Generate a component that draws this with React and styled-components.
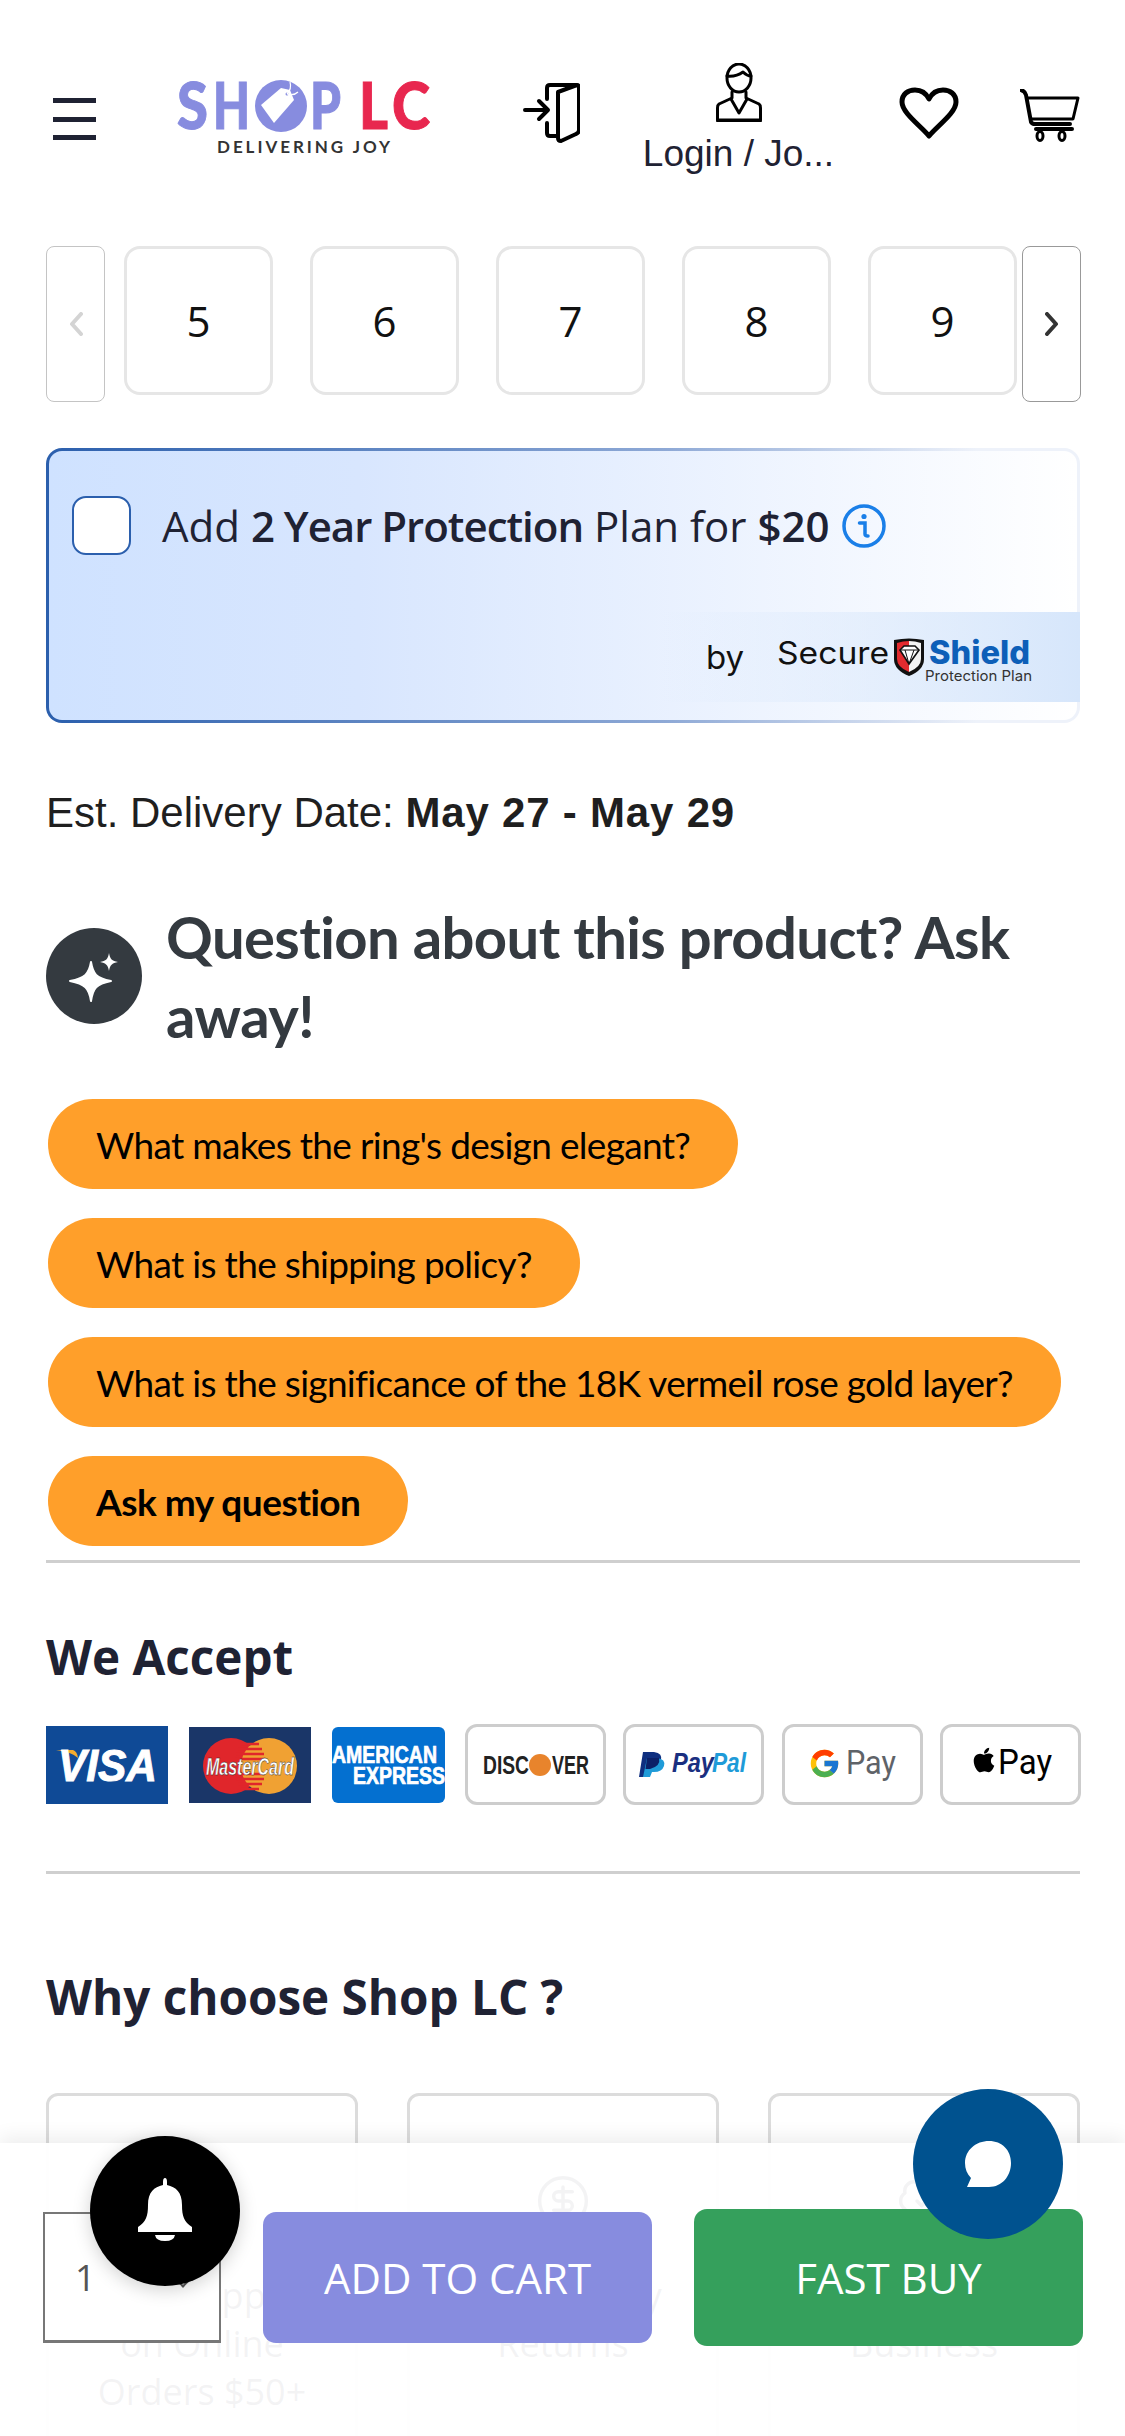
import React from 'react'
import styled, { createGlobalStyle } from 'styled-components'
import { FcGoogle } from 'react-icons/fc'
import { FaApple } from 'react-icons/fa'
import { Truck, CircleDollarSign, BadgeCheck } from 'lucide-react'

const GlobalStyle = createGlobalStyle`
  html, body {
    margin: 0;
    padding: 0;
    background: #fff;
    overflow: hidden;
  }
  * { box-sizing: border-box; }
`

const questions = [
  { text: "What makes the ring's design elegant?" },
  { text: 'What is the shipping policy?' },
  { text: 'What is the significance of the 18K vermeil rose gold layer?' },
  { text: 'Ask my question', strong: true },
]

const perks = [
  { icon: Truck, lines: ['Free Shipping', 'on Online', 'Orders $50+'] },
  { icon: CircleDollarSign, lines: ['Easy 30-day', 'Returns'] },
  { icon: BadgeCheck, lines: ['Family Owned', 'Business'] },
]

function Logo() {
  return (
    <BrandSvg viewBox="0 0 253 72" width="253" height="72">
      <g fontFamily="Lato, sans-serif" fontWeight="900" fontSize="65" strokeWidth="1">
        <text x="0" y="47" fill="#878cdf" stroke="#878cdf" textLength="31" lengthAdjust="spacingAndGlyphs">S</text>
        <text x="36" y="47" fill="#878cdf" stroke="#878cdf" textLength="37" lengthAdjust="spacingAndGlyphs">H</text>
        <text x="133" y="47" fill="#878cdf" stroke="#878cdf" textLength="31" lengthAdjust="spacingAndGlyphs">P</text>
        <text x="182" y="47" fill="#e8274f" stroke="#e8274f" textLength="29" lengthAdjust="spacingAndGlyphs">L</text>
        <text x="215" y="47" fill="#e8274f" stroke="#e8274f" textLength="38" lengthAdjust="spacingAndGlyphs">C</text>
      </g>
      <circle cx="104" cy="24" r="26" fill="#878cdf" />
      <path d="M84 23 L104 6 L113 8 L117 18 L97 41 Z" fill="#fff" />
      <circle cx="110" cy="12" r="1.5" fill="#878cdf" />
      <path d="M110 12 Q115 7 113 0 M110 12 Q117 14 121 10" stroke="#fff" strokeWidth="1.2" fill="none" />
      <text x="40" y="71" fontFamily="Lato, sans-serif" fontWeight="700" fontSize="17" fill="#333" textLength="173">DELIVERING JOY</text>
    </BrandSvg>
  )
}

function DoorIcon() {
  return (
    <svg viewBox="0 0 57 60" width="57" height="60" fill="none" stroke="#000" strokeWidth="4" strokeLinecap="round" strokeLinejoin="round">
      <path d="M2 27 H24 M16 18 L25 27 L16 36" />
      <path d="M24 16 V5 Q24 2 27 2 H53" />
      <path d="M24 40 V50 Q24 53 27 53 H34" />
      <path d="M35 9 L54 2 Q56 2 56 5 V47 Q56 50 53 51 L38 58 Q35 58 35 55 Z" />
    </svg>
  )
}

function PersonIcon() {
  return (
    <svg viewBox="0 0 46 59" width="46" height="59" fill="none" stroke="#000" strokeWidth="3" strokeLinejoin="round" strokeLinecap="round">
      <ellipse cx="23" cy="15" rx="12" ry="14" />
      <path d="M11 13 Q20 14 27 9 Q31 13 35 13" />
      <path d="M16 29 V35 L3 41 Q1.5 42 1.5 45 V57 H44.5 V45 Q44.5 42 43 41 L30 35 V29" />
      <path d="M15 36 L23 50 L31 36" />
      <path d="M1 58 H45" strokeWidth="2" />
    </svg>
  )
}

function HeartIcon() {
  return (
    <svg viewBox="0 0 60 52" width="60" height="52" fill="none" stroke="#000" strokeWidth="5" strokeLinejoin="round">
      <path d="M30 49 C22 39 3 26 3 15 C3 7 9 3 16 3 C22 3 27 6 30 12 C33 6 38 3 44 3 C51 3 57 7 57 15 C57 26 38 39 30 49 Z" />
    </svg>
  )
}

function CartIcon() {
  return (
    <svg viewBox="0 0 60 54" width="60" height="54" fill="none" stroke="#000" strokeWidth="4" strokeLinejoin="round" strokeLinecap="round">
      <path d="M1 1 Q5 2 6 6 L11 33 Q12 35 15 35 H50" />
      <path d="M7 9 H58 L53 30 H12" strokeWidth="3" />
      <path d="M16 40 H52" />
      <ellipse cx="20" cy="47" rx="3" ry="4.5" strokeWidth="3" />
      <ellipse cx="42" cy="47" rx="3" ry="4.5" strokeWidth="3" />
    </svg>
  )
}

function Chevron({ dir, color }) {
  return (
    <svg viewBox="0 0 14 24" width="14" height="24" fill="none" stroke={color} strokeWidth="4" strokeLinecap="round" strokeLinejoin="round">
      <path d={dir === 'left' ? 'M12 2 L3 12 L12 22' : 'M2 2 L11 12 L2 22'} />
    </svg>
  )
}

function InfoIcon() {
  return (
    <svg viewBox="0 0 44 44" width="44" height="44" fill="none">
      <circle cx="22" cy="22" r="20" stroke="#1a7fe8" strokeWidth="3.5" />
      <circle cx="22" cy="12.5" r="2.6" fill="#1a7fe8" />
      <path d="M17.5 19 H23 V30 Q23 32 26 32" stroke="#1a7fe8" strokeWidth="3.5" strokeLinecap="round" />
    </svg>
  )
}

function SecureShield() {
  return (
    <BrandSvg viewBox="0 0 265 48" width="265" height="48">
      <text x="0" y="31" fontFamily="Inter, sans-serif" fontSize="31" fill="#111" textLength="112" lengthAdjust="spacingAndGlyphs">Secure</text>
      <path d="M117 7 Q132 4 147 7 V26 Q147 37 132 43 Q117 37 117 26 Z" fill="#111" />
      <path d="M120 10 Q126 8 132 8 V39 Q120 34 120 26 Z" fill="#e32b2f" />
      <path d="M132 8 Q138 8 144 10 V26 Q144 34 132 39 Z" fill="#f3f3f3" />
      <path d="M123 17 L127 13 H138 L142 17 L132 31 Z" fill="#fff" stroke="#111" strokeWidth="1.6" />
      <path d="M123 17 H142 M128 17 L132 31 L137 17" stroke="#111" strokeWidth="1" fill="none" />
      <text x="152" y="31" fontFamily="Inter, sans-serif" fontWeight="800" fontSize="32" fill="#0d5fb8" textLength="101" lengthAdjust="spacingAndGlyphs">Shield</text>
      <text x="148" y="48" fontFamily="Inter, sans-serif" fontSize="14.5" fill="#333" textLength="107" lengthAdjust="spacingAndGlyphs">Protection Plan</text>
    </BrandSvg>
  )
}

function SparkleIcon() {
  return (
    <svg viewBox="0 0 96 96" width="96" height="96">
      <circle cx="48" cy="48" r="48" fill="#343a40" />
      <path d="M45 34 C47 46 50 50 65 53 C50 56 47 60 45 73 C43 60 39 56 24 53 C39 50 43 46 45 34 Z" fill="#fff" stroke="#fff" strokeWidth="2" strokeLinejoin="round" />
      <path d="M63 25 C64 31 66 33 72 34 C66 35 64 37 63 43 C62 37 60 35 54 34 C60 33 62 31 63 25 Z" fill="#fff" />
    </svg>
  )
}

function VisaLogo() {
  return (
    <BrandSvg viewBox="0 0 122 78" width="122" height="78">
      <path d="M10 24 H27 Q31 25 32 32 Q26 26 10 24 Z" fill="#f2ac2f" />
      <text x="12" y="55" fontFamily="'Liberation Sans', sans-serif" fontWeight="700" fontStyle="italic" fontSize="44" fill="#fff" stroke="#fff" strokeWidth="1" textLength="99" lengthAdjust="spacingAndGlyphs">VISA</text>
    </BrandSvg>
  )
}

function MasterCardLogo() {
  return (
    <BrandSvg viewBox="0 0 122 78" width="122" height="78">
      <circle cx="42" cy="39" r="28" fill="#e0262b" />
      <circle cx="80" cy="39" r="28" fill="#f0a133" />
      <path d="M52 17 H70 M49 22 H73 M47 27 H75 M46 32 H76 M46 47 H76 M47 52 H75 M49 57 H73 M52 62 H70" stroke="#e0262b" strokeWidth="2.4" />
      <text x="17" y="48" fontFamily="'Liberation Sans', sans-serif" fontWeight="700" fontStyle="italic" fontSize="23" fill="#fff" stroke="#222" strokeWidth="0.4" textLength="88" lengthAdjust="spacingAndGlyphs">MasterCard</text>
    </BrandSvg>
  )
}

function AmexLogo() {
  return (
    <BrandSvg viewBox="0 0 113 76" width="113" height="76">
      <g fontFamily="'Liberation Sans', sans-serif" fontWeight="700" fontSize="23" fill="#fff" stroke="#fff" strokeWidth="0.7">
        <text x="0" y="36" textLength="105" lengthAdjust="spacingAndGlyphs">AMERICAN</text>
        <text x="21" y="57" textLength="92" lengthAdjust="spacingAndGlyphs">EXPRESS</text>
      </g>
    </BrandSvg>
  )
}

function DiscoverLogo() {
  return (
    <BrandSvg viewBox="0 0 135 75" width="135" height="75">
      <g fontFamily="'Liberation Sans', sans-serif" fontWeight="700" fontSize="25" fill="#222">
        <text x="15" y="47" textLength="46" lengthAdjust="spacingAndGlyphs">DISC</text>
        <text x="84" y="47" textLength="37" lengthAdjust="spacingAndGlyphs">VER</text>
      </g>
      <circle cx="72" cy="38" r="11" fill="#e8842c" />
    </BrandSvg>
  )
}

function PayPalLogo() {
  return (
    <BrandSvg viewBox="0 0 135 75" width="135" height="75">
      <path d="M17 25 H28 Q37 26 35 34 Q33 42 23 42 H21 L19 50 H13 Z" fill="#0f2f80" />
      <path d="M21 31 H31 Q40 32 38 39 Q36 45 28 45 H26 L24 50 H17 Z" fill="#1f9bd8" />
      <path d="M21 31 H33 Q35 39 24 42 H19.5 Z" fill="#0c2068" />
      <text x="46" y="45" fontFamily="'Liberation Sans', sans-serif" fontWeight="700" fontStyle="italic" fontSize="27" fill="#1a2f80" textLength="42" lengthAdjust="spacingAndGlyphs">Pay</text>
      <text x="86" y="45" fontFamily="'Liberation Sans', sans-serif" fontWeight="700" fontStyle="italic" fontSize="27" fill="#1f9bd8" textLength="34" lengthAdjust="spacingAndGlyphs">Pal</text>
    </BrandSvg>
  )
}

function GooglePayLogo() {
  return (
    <BrandSvg viewBox="0 0 135 75" width="135" height="75">
      <FcGoogle x="23" y="20" size="33" />
      <text x="61" y="47" fontFamily="Roboto, sans-serif" fontSize="34" fill="#5f6368" textLength="50" lengthAdjust="spacingAndGlyphs">Pay</text>
    </BrandSvg>
  )
}

function ApplePayLogo() {
  return (
    <BrandSvg viewBox="0 0 135 75" width="135" height="75">
      <FaApple x="27" y="19" size="28" color="#000" />
      <text x="55" y="47" fontFamily="Roboto, sans-serif" fontSize="35" fill="#000" textLength="54" lengthAdjust="spacingAndGlyphs">Pay</text>
    </BrandSvg>
  )
}

function BellIcon() {
  return (
    <svg viewBox="0 0 54 63" width="54" height="63" fill="#fff">
      <path d="M27 0 Q29 0 29 4 V7 C38 9 44 14 44 27 C44 38 46 44 54 49 V54 H0 V49 C8 44 10 38 10 27 C10 14 16 9 25 7 V4 Q25 0 27 0 Z" />
      <path d="M17 57 H37 Q36 63 27 63 Q18 63 17 57 Z" />
    </svg>
  )
}

function ChatIcon() {
  return (
    <svg viewBox="0 0 46 47" width="46" height="47" fill="#fff">
      <path d="M24 0 C37 0 46 9 46 22 C46 35 37 46 24 46 H2 L6 37 C2 33 0 28 0 22 C0 9 11 0 24 0 Z" />
    </svg>
  )
}

function App() {
  return (
    <>
      <GlobalStyle />
      <Page>
        <Header>
          <Burger>
            <span />
            <span />
            <span />
          </Burger>
          <HeaderCell $top={82}><Logo /></HeaderCell>
          <HeaderCell $top={83}><DoorIcon /></HeaderCell>
          <LoginCell>
            <PersonIcon />
            <LoginText>Login / Jo...</LoginText>
          </LoginCell>
          <HeaderCell $top={87}><HeartIcon /></HeaderCell>
          <HeaderCell $top={89}><CartIcon /></HeaderCell>
        </Header>

        <Pager>
          <PagerArrow $muted><Chevron dir="left" color="#d4d4d4" /></PagerArrow>
          <PagerList>
            {[5, 6, 7, 8, 9].map((n) => (
              <PagerItem key={n}>{n}</PagerItem>
            ))}
          </PagerList>
          <PagerArrow><Chevron dir="right" color="#333" /></PagerArrow>
        </Pager>

        <Protection>
          <ProtectionRow>
            <Checkbox />
            <ProtectionText>
              Add <b>2 Year Protection</b> Plan for <Price>$20</Price>
            </ProtectionText>
            <InfoIcon />
          </ProtectionRow>
          <ProviderStrip>
            <By>by</By>
            <SecureShield />
          </ProviderStrip>
        </Protection>

        <Delivery>
          Est. Delivery Date: <b>May 27 - May 29</b>
        </Delivery>

        <QuestionHead>
          <SparkleIcon />
          <QuestionTitle>Question about this product? Ask away!</QuestionTitle>
        </QuestionHead>

        <Pills>
          {questions.map((q) => (
            <Pill key={q.text} $strong={q.strong}>{q.text}</Pill>
          ))}
        </Pills>

        <Divider $top={14} />

        <SectionTitle $top={64}>We Accept</SectionTitle>
        <Payments>
          <PayGroup $width={399}>
            <PayCard $w={122} $h={78} $bg="#0f4a96"><VisaLogo /></PayCard>
            <PayCard $w={122} $h={76} $bg="#1a3668"><MasterCardLogo /></PayCard>
            <PayCard $w={113} $h={76} $bg="#0470d0" $radius={6}><AmexLogo /></PayCard>
          </PayGroup>
          <PayGroup $width={616}>
            <PayCard $w={141} $h={81} $outlined><DiscoverLogo /></PayCard>
            <PayCard $w={141} $h={81} $outlined><PayPalLogo /></PayCard>
            <PayCard $w={141} $h={81} $outlined><GooglePayLogo /></PayCard>
            <PayCard $w={141} $h={81} $outlined><ApplePayLogo /></PayCard>
          </PayGroup>
        </Payments>

        <Divider $top={66} />

        <SectionTitle $top={93}>Why choose Shop LC ?</SectionTitle>
        <Perks>
          {perks.map((p) => (
            <PerkCard key={p.lines[1]}>
              <p.icon size={56} strokeWidth={1.5} color="#1f2233" />
              <PerkText>
                {p.lines.map((l) => (
                  <div key={l}>{l}</div>
                ))}
              </PerkText>
            </PerkCard>
          ))}
        </Perks>

        <BottomBar>
          <QtySelect>
            1
            <QtyCaret />
          </QtySelect>
          <AddButton>ADD TO CART</AddButton>
          <BuyButton>FAST BUY</BuyButton>
        </BottomBar>

        <BellFab><BellIcon /></BellFab>
        <ChatFab><ChatIcon /></ChatFab>
      </Page>
    </>
  )
}

const Page = styled.div`
  position: relative;
  width: 1125px;
  height: 2436px;
  overflow: hidden;
  background: #fff;
  font-family: 'Open Sans', sans-serif;
  color: #1f2233;
`

const BrandSvg = styled.svg`
  display: block;
  overflow: visible;
`

const Header = styled.header`
  height: 246px;
  padding-left: 53px;
  display: grid;
  grid-template-columns: 124px 346px 121px 255px 121px 60px;
  align-items: start;
`

const HeaderCell = styled.div`
  margin-top: ${(p) => p.$top}px;
  line-height: 0;
`

const Burger = styled.div`
  margin-top: 98px;
  width: 43px;
  height: 42px;
  display: flex;
  flex-direction: column;
  justify-content: space-between;

  span {
    display: block;
    height: 5px;
    background: #1f2233;
  }
`

const LoginCell = styled.div`
  margin-top: 63px;
  width: 189px;
  display: flex;
  flex-direction: column;
  align-items: center;
`

const LoginText = styled.div`
  font-family: 'Liberation Sans', sans-serif;
  font-size: 37px;
  line-height: 40px;
  margin-top: 12px;
  white-space: nowrap;
  color: #1f2233;
`

const Pager = styled.div`
  display: flex;
  align-items: flex-start;
  padding-left: 46px;
`

const PagerArrow = styled.div`
  width: 59px;
  height: 156px;
  background: #fff;
  border: 1.5px solid ${(p) => (p.$muted ? '#c4c4c4' : '#999')};
  border-radius: 8px;
  display: flex;
  align-items: center;
  justify-content: center;
`

const PagerList = styled.div`
  display: flex;
  gap: 37px;
  margin: 0 5px 0 19px;
`

const PagerItem = styled.div`
  width: 149px;
  height: 149px;
  border: 3px solid #e6e6e6;
  border-radius: 16px;
  display: flex;
  align-items: center;
  justify-content: center;
  font-size: 42px;
  color: #111;
`

const Protection = styled.section`
  margin: 46px 0 0 46px;
  width: 1034px;
  height: 275px;
  border: 3px solid transparent;
  border-radius: 16px;
  background:
    linear-gradient(90deg, #cfe2ff 0%, #d8e6fe 30%, #ffffff 100%) padding-box,
    linear-gradient(90deg, #2b5fad 0%, #8ea9d6 60%, #eef2fa 90%) border-box;
  display: flex;
  flex-direction: column;
`

const ProtectionRow = styled.div`
  display: flex;
  align-items: center;
  padding: 45px 0 0 23px;
`

const Checkbox = styled.div`
  width: 59px;
  height: 59px;
  background: #fff;
  border: 2.5px solid #2b5fad;
  border-radius: 14px;
  margin-right: 31px;
`

const ProtectionText = styled.div`
  font-size: 42px;
  line-height: 59px;
  margin-right: 13px;
  white-space: nowrap;

  b {
    font-weight: 600;
    letter-spacing: -1px;
  }
`

const Price = styled.span`
  font-weight: 600;
`

const ProviderStrip = styled.div`
  margin-top: 57px;
  margin-right: -3px;
  margin-left: auto;
  width: 420px;
  height: 90px;
  padding-left: 46px;
  background: linear-gradient(90deg, rgba(214, 230, 251, 0) 0%, #d6e6fb 100%);
  display: flex;
  align-items: center;
`

const By = styled.span`
  font-family: Inter, sans-serif;
  font-size: 33px;
  margin-right: 33px;
  color: #111;
`

const Delivery = styled.div`
  margin: 60px 0 0 46px;
  font-family: 'Liberation Sans', sans-serif;
  font-size: 42px;
  line-height: 60px;
  color: #1f1f1f;

  b {
    letter-spacing: 0.8px;
  }
`

const QuestionHead = styled.div`
  margin: 54px 0 0 46px;
  display: flex;
  align-items: center;
  gap: 24px;
`

const QuestionTitle = styled.h2`
  margin: 0;
  width: 880px;
  font-family: Lato, sans-serif;
  font-weight: 700;
  font-size: 58px;
  line-height: 79px;
  letter-spacing: -0.6px;
  color: #343a40;
`

const Pills = styled.div`
  margin: 44px 0 0 48px;
  display: flex;
  flex-direction: column;
  align-items: flex-start;
  gap: 29px;
`

const Pill = styled.div`
  height: 90px;
  padding: 0 48px;
  border-radius: 45px;
  background: #ff9f2a;
  display: flex;
  align-items: center;
  font-family: Lato, sans-serif;
  font-size: 37px;
  font-weight: ${(p) => (p.$strong ? 700 : 400)};
  letter-spacing: ${(p) => (p.$strong ? -0.5 : -0.68)}px;
  color: #000;
  white-space: nowrap;
`

const Divider = styled.hr`
  margin: ${(p) => p.$top}px 45px 0 46px;
  border: 0;
  height: 3px;
  background: #cfcfcf;
`

const SectionTitle = styled.h3`
  margin: ${(p) => p.$top}px 0 0 46px;
  font-size: 47.6px;
  line-height: 60px;
  font-weight: 700;
  color: #1f2233;
`

const Payments = styled.div`
  margin: 37px 44px 0 46px;
  height: 81px;
  display: flex;
  gap: 20px;
`

const PayGroup = styled.div`
  width: ${(p) => p.$width}px;
  display: flex;
  justify-content: space-between;
  align-items: center;
`

const PayCard = styled.div`
  flex: none;
  width: ${(p) => p.$w}px;
  height: ${(p) => p.$h}px;
  background: ${(p) => p.$bg || '#fff'};
  border: ${(p) => (p.$outlined ? '3px solid #cdcdcd' : 'none')};
  border-radius: ${(p) => (p.$outlined ? 12 : p.$radius || 0)}px;
  line-height: 0;
`

const Perks = styled.div`
  margin: 66px 45px 0 46px;
  display: grid;
  grid-template-columns: repeat(3, 1fr);
  gap: 49px;
`

const PerkCard = styled.div`
  height: 400px;
  padding-top: 77px;
  border: 3px solid #dcdcdc;
  border-radius: 12px;
  display: flex;
  flex-direction: column;
  align-items: center;
`

const PerkText = styled.div`
  margin-top: 43px;
  font-size: 36px;
  line-height: 48px;
  text-align: center;
  white-space: nowrap;
`

const BottomBar = styled.div`
  position: absolute;
  left: 0;
  right: 0;
  bottom: 0;
  height: 293px;
  padding: 66px 42px 0 43px;
  background: rgba(255, 255, 255, 0.95);
  box-shadow: 0 -6px 18px rgba(0, 0, 0, 0.07);
  display: flex;
  align-items: center;
  align-content: flex-start;
  flex-wrap: wrap;
  gap: 0 42px;
`

const QtySelect = styled.div`
  position: relative;
  width: 178px;
  height: 131px;
  padding-left: 30px;
  border: 2px solid #777;
  border-bottom-width: 3px;
  background: #fff;
  display: flex;
  align-items: center;
  font-size: 36px;
  color: #555;
`

const QtyCaret = styled.span`
  position: absolute;
  right: 32px;
  top: 64px;
  width: 8px;
  height: 8px;
  border-right: 2px solid #555;
  border-bottom: 2px solid #555;
  transform: rotate(45deg);
`

const AddButton = styled.div`
  width: 389px;
  height: 131px;
  border-radius: 13px;
  background: #878cdf;
  color: #fff;
  font-size: 42px;
  display: flex;
  align-items: center;
  justify-content: center;
`

const BuyButton = styled(AddButton)`
  height: 137px;
  background: #35a05c;
`

const BellFab = styled.div`
  position: absolute;
  left: 90px;
  top: 2136px;
  width: 150px;
  height: 150px;
  padding-bottom: 3px;
  border-radius: 50%;
  background: #000;
  box-shadow: 0 4px 18px rgba(0, 0, 0, 0.18);
  display: flex;
  align-items: center;
  justify-content: center;
`

const ChatFab = styled.div`
  position: absolute;
  left: 913px;
  top: 2089px;
  width: 150px;
  height: 150px;
  border-radius: 50%;
  background: #00528f;
  display: flex;
  align-items: center;
  justify-content: center;
`

export default App
